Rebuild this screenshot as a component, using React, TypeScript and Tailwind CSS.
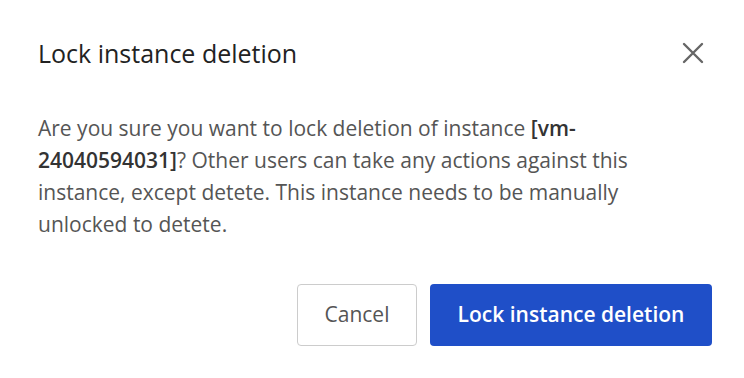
export default function App() {
  return (
    <div className="w-[744px] h-[378px] bg-white font-['Open_Sans',sans-serif] flex flex-col px-[38px] pt-[36px]">
      <div className="flex items-center justify-between">
        <h2 className="text-[25px] leading-[34px] text-[#222]">Lock instance deletion</h2>
        <button className="mr-[2px] text-[#666]">
          <svg width="22" height="22" viewBox="0 0 22 22" fill="none" stroke="currentColor" strokeWidth="2.4" strokeLinecap="round">
            <path d="M2 2 L20 20 M20 2 L2 20" />
          </svg>
        </button>
      </div>

      <p className="mt-[42px] text-[21px] leading-[32px] text-[#555] pr-[20px]">
        Are you sure you want to lock deletion of instance <span className="font-semibold text-[#333]">[vm-24040594031]</span>? Other users can take any actions against this instance, except detete. This instance needs to be manually unlocked to detete.
      </p>

      <div className="mt-[44px] mr-[-6px] flex justify-end gap-[13px]">
        <button className="w-[120px] h-[62px] rounded-[4px] border border-[#ccc] bg-white text-[21px] text-[#555]">
          Cancel
        </button>
        <button className="w-[282px] h-[62px] rounded-[4px] bg-[#1f4fc8] text-[21px] font-semibold text-white">
          Lock instance deletion
        </button>
      </div>
    </div>
  );
}
